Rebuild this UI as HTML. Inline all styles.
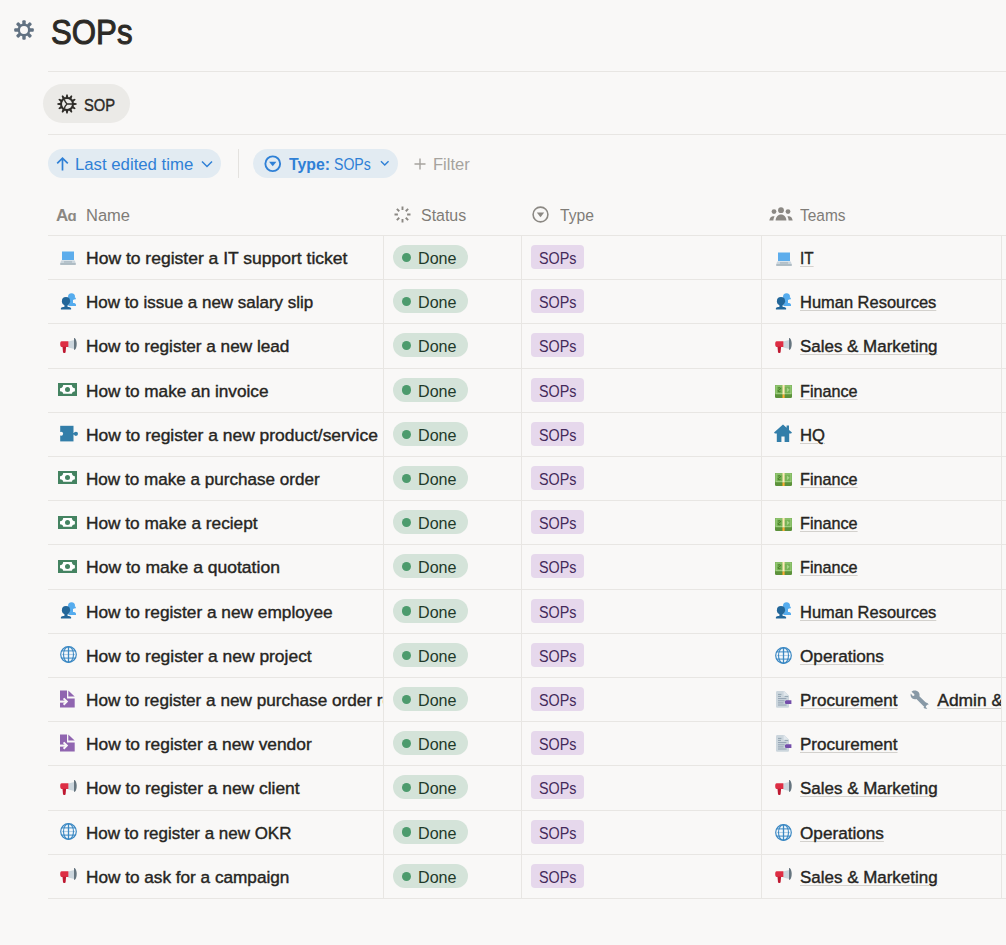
<!DOCTYPE html>
<html><head><meta charset="utf-8"><title>SOPs</title>
<style>
html,body{margin:0;padding:0;width:1006px;height:945px;overflow:hidden;background:#f9f8f7;font-family:"Liberation Sans",sans-serif;position:relative}
.t{position:absolute;white-space:nowrap;transform-origin:0 50%}
u{text-decoration:underline;text-decoration-color:#d3d1cd;text-decoration-thickness:1px;text-underline-offset:1.5px}
svg{overflow:visible}
</style></head><body>
<svg style="position:absolute;left:13.9px;top:19.9px" width="20" height="20" viewBox="0 0 20 20"><circle cx="10" cy="10" r="5.2" fill="none" stroke="#627282" stroke-width="2.4"/><rect x="8.3" y="0.2" width="3.4" height="5" rx="1" fill="#627282" transform="rotate(0 10 10)"/><rect x="8.3" y="0.2" width="3.4" height="5" rx="1" fill="#627282" transform="rotate(45 10 10)"/><rect x="8.3" y="0.2" width="3.4" height="5" rx="1" fill="#627282" transform="rotate(90 10 10)"/><rect x="8.3" y="0.2" width="3.4" height="5" rx="1" fill="#627282" transform="rotate(135 10 10)"/><rect x="8.3" y="0.2" width="3.4" height="5" rx="1" fill="#627282" transform="rotate(180 10 10)"/><rect x="8.3" y="0.2" width="3.4" height="5" rx="1" fill="#627282" transform="rotate(225 10 10)"/><rect x="8.3" y="0.2" width="3.4" height="5" rx="1" fill="#627282" transform="rotate(270 10 10)"/><rect x="8.3" y="0.2" width="3.4" height="5" rx="1" fill="#627282" transform="rotate(315 10 10)"/></svg>
<div class="t" id="t1" style="left:50.50px;top:19.77px;font-size:35px;line-height:24px;color:#2c2a26;transform:scaleX(0.8915);-webkit-text-stroke:1.0px #2c2a26;">SOPs</div>
<div style="position:absolute;left:48px;top:71px;width:958px;height:1px;background:#e8e6e3"></div>
<div style="position:absolute;left:43px;top:84px;width:87px;height:39px;background:#ebeae7;border-radius:20px"></div>
<svg style="position:absolute;left:56.9px;top:93.9px" width="20" height="20" viewBox="0 0 20 20"><polygon points="8.65,3.64 9.33,0.42 10.67,0.42 11.35,3.64 12.01,3.82 14.21,1.37 15.37,2.04 14.35,5.17 14.83,5.65 17.96,4.63 18.63,5.79 16.18,7.99 16.36,8.65 19.58,9.33 19.58,10.67 16.36,11.35 16.18,12.01 18.63,14.21 17.96,15.37 14.83,14.35 14.35,14.83 15.37,17.96 14.21,18.63 12.01,16.18 11.35,16.36 10.67,19.58 9.33,19.58 8.65,16.36 7.99,16.18 5.79,18.63 4.63,17.96 5.65,14.83 5.17,14.35 2.04,15.37 1.37,14.21 3.82,12.01 3.64,11.35 0.42,10.67 0.42,9.33 3.64,8.65 3.82,7.99 1.37,5.79 2.04,4.63 5.17,5.65 5.65,5.17 4.63,2.04 5.79,1.37 7.99,3.82" fill="#2f2d29"/><circle cx="10" cy="10" r="6.9" fill="#2f2d29"/><circle cx="10" cy="10" r="5.0" fill="#ebeae7"/><path d="M10 10H15M10 10C8.4 8.6 7.6 7.2 7.4 5.4M10 10C8.4 11.4 7.6 12.8 7.4 14.6" fill="none" stroke="#2f2d29" stroke-width="1.3"/></svg>
<div class="t" id="t2" style="left:83.90px;top:92.57px;font-size:17.4px;line-height:24px;color:#2f2d29;transform:scaleX(0.8493);-webkit-text-stroke:0.4px #262522;">SOP</div>
<div style="position:absolute;left:48px;top:134px;width:958px;height:1px;background:#e8e6e3"></div>
<div style="position:absolute;left:48px;top:149px;width:173px;height:29px;background:#e2ebf2;border-radius:15px"></div>
<svg style="position:absolute;left:56px;top:157px" width="13" height="14" viewBox="0 0 13 14"><path d="M6.5 1.2V13.5M1.2 6.4L6.5 1.2l5.3 5.2" fill="none" stroke="#2f80d6" stroke-width="1.7"/></svg>
<div class="t" id="t3" style="left:74.80px;top:151.97px;font-size:17.4px;line-height:24px;color:#2f80d6;transform:scaleX(0.9627);">Last edited time</div>
<svg style="position:absolute;left:200.5px;top:160px" width="12" height="8" viewBox="0 0 12 8"><path d="M1 1.5l5 5 5-5" fill="none" stroke="#2f80d6" stroke-width="1.5"/></svg>
<div style="position:absolute;left:238px;top:149px;width:1px;height:29px;background:#e4e2df"></div>
<div style="position:absolute;left:253px;top:149px;width:145px;height:29px;background:#e2ebf2;border-radius:15px"></div>
<svg style="position:absolute;left:264px;top:155px" width="17.5" height="17.5" viewBox="0 0 18 18"><circle cx="9" cy="9" r="7.6" fill="none" stroke="#2f80d6" stroke-width="1.9"/><path d="M5.2 7h7.6L9 11.6z" fill="#2f80d6"/></svg>
<div class="t" id="t4" style="left:289.30px;top:151.97px;font-size:17.4px;line-height:24px;color:#2f80d6;font-weight:700;transform:scaleX(0.9092);">Type:</div>
<div class="t" id="t5" style="left:334.20px;top:151.97px;font-size:17.4px;line-height:24px;color:#2f80d6;transform:scaleX(0.8102);">SOPs</div>
<svg style="position:absolute;left:380px;top:160px" width="9.5" height="7" viewBox="0 0 10 7"><path d="M1 1.2l4 4 4-4" fill="none" stroke="#2f80d6" stroke-width="1.5"/></svg>
<svg style="position:absolute;left:414px;top:158px" width="12" height="12" viewBox="0 0 12 12"><path d="M6 0.5v11M0.5 6h11" stroke="#a6a39e" stroke-width="1.4"/></svg>
<div class="t" id="t6" style="left:432.70px;top:152.27px;font-size:17.4px;line-height:24px;color:#a6a39e;transform:scaleX(0.9520);">Filter</div>
<svg style="position:absolute;left:56px;top:207.5px" width="22" height="14" viewBox="0 0 22 14"><text x="0" y="13.4" font-family="Liberation Sans" font-weight="700" font-size="17" fill="#8b8883">A</text><text x="11.6" y="13.4" font-family="Liberation Sans" font-weight="700" font-size="15" fill="#8b8883">ɑ</text></svg>
<div class="t" id="t7" style="left:85.70px;top:202.97px;font-size:17.4px;line-height:24px;color:#7f7c77;transform:scaleX(0.9485);">Name</div>
<svg style="position:absolute;left:394px;top:206px" width="17" height="17" viewBox="0 0 17 17"><path d="M8.50 3.90L8.50 0.50M11.75 5.25L14.16 2.84M13.10 8.50L16.50 8.50M11.75 11.75L14.16 14.16M8.50 13.10L8.50 16.50M5.25 11.75L2.84 14.16M3.90 8.50L0.50 8.50M5.25 5.25L2.84 2.84" stroke="#8b8883" stroke-width="1.9"/></svg>
<div class="t" id="t8" style="left:421.20px;top:202.97px;font-size:17.4px;line-height:24px;color:#7f7c77;transform:scaleX(0.9166);">Status</div>
<svg style="position:absolute;left:531.5px;top:205.8px" width="17" height="17" viewBox="0 0 17 17"><circle cx="8.5" cy="8.5" r="7.4" fill="none" stroke="#8b8883" stroke-width="1.6"/><path d="M4.8 6.6h7.4L8.5 11.2z" fill="#8b8883"/></svg>
<div class="t" id="t9" style="left:560.00px;top:202.97px;font-size:17.4px;line-height:24px;color:#7f7c77;transform:scaleX(0.9018);">Type</div>
<svg style="position:absolute;left:768.5px;top:206.5px" width="24" height="14" viewBox="0 0 24 14"><circle cx="5" cy="4.6" r="2.4" fill="#8b8883"/><circle cx="12" cy="3.2" r="2.9" fill="#8b8883"/><circle cx="19" cy="4.6" r="2.4" fill="#8b8883"/><path d="M6.6 13.6c0-3.6 2.4-6.2 5.4-6.2s5.4 2.6 5.4 6.2z" fill="#8b8883"/><path d="M0.3 13.6c0.4-2.4 1.6-4.2 3.4-4.4 0.7 0 1.4 0.1 2 0.4-0.8 1-1.2 2.4-1.3 4z" fill="#8b8883"/><path d="M23.7 13.6c-0.4-2.4-1.6-4.2-3.4-4.4-0.7 0-1.4 0.1-2 0.4 0.8 1 1.2 2.4 1.3 4z" fill="#8b8883"/></svg>
<div class="t" id="t10" style="left:800.00px;top:202.97px;font-size:17.4px;line-height:24px;color:#7f7c77;transform:scaleX(0.8881);">Teams</div>
<div style="position:absolute;left:48px;top:235.00px;width:958px;height:1px;background:#e8e6e3"></div>
<div style="position:absolute;left:48px;top:279.20px;width:958px;height:1px;background:#e8e6e3"></div>
<div style="position:absolute;left:48px;top:323.40px;width:958px;height:1px;background:#e8e6e3"></div>
<div style="position:absolute;left:48px;top:367.60px;width:958px;height:1px;background:#e8e6e3"></div>
<div style="position:absolute;left:48px;top:411.80px;width:958px;height:1px;background:#e8e6e3"></div>
<div style="position:absolute;left:48px;top:456.00px;width:958px;height:1px;background:#e8e6e3"></div>
<div style="position:absolute;left:48px;top:500.20px;width:958px;height:1px;background:#e8e6e3"></div>
<div style="position:absolute;left:48px;top:544.40px;width:958px;height:1px;background:#e8e6e3"></div>
<div style="position:absolute;left:48px;top:588.60px;width:958px;height:1px;background:#e8e6e3"></div>
<div style="position:absolute;left:48px;top:632.80px;width:958px;height:1px;background:#e8e6e3"></div>
<div style="position:absolute;left:48px;top:677.00px;width:958px;height:1px;background:#e8e6e3"></div>
<div style="position:absolute;left:48px;top:721.20px;width:958px;height:1px;background:#e8e6e3"></div>
<div style="position:absolute;left:48px;top:765.40px;width:958px;height:1px;background:#e8e6e3"></div>
<div style="position:absolute;left:48px;top:809.60px;width:958px;height:1px;background:#e8e6e3"></div>
<div style="position:absolute;left:48px;top:853.80px;width:958px;height:1px;background:#e8e6e3"></div>
<div style="position:absolute;left:48px;top:898.00px;width:958px;height:1px;background:#e8e6e3"></div>
<div style="position:absolute;left:383px;top:235.0px;width:1px;height:663.00px;background:#e8e6e3"></div>
<div style="position:absolute;left:521px;top:235.0px;width:1px;height:663.00px;background:#e8e6e3"></div>
<div style="position:absolute;left:761px;top:235.0px;width:1px;height:663.00px;background:#e8e6e3"></div>
<div style="position:absolute;left:1001px;top:235.0px;width:1px;height:663.00px;background:#e8e6e3"></div>
<svg style="position:absolute;left:60px;top:251.0px" width="16" height="14" viewBox="0 0 16 14"><rect x="2" y="0.5" width="12" height="8.6" fill="#5dadec"/><path d="M1.2 9.6h13.6l1 2.6H0.2z" fill="#ccd6dd"/><rect x="0" y="12.2" width="16" height="1.6" rx="0.8" fill="#99aab5"/><rect x="4" y="10.5" width="8" height="0.9" fill="#99aab5"/></svg>
<div class="t" id="t11" style="left:86.00px;top:245.97px;font-size:17.4px;line-height:24px;color:#262522;transform:scaleX(1.0066);-webkit-text-stroke:0.4px #262522;">How to register a IT support ticket</div>
<div style="position:absolute;left:393px;top:245.00px;width:75px;height:24px;background:#d4e3d9;border-radius:12px"></div>
<div style="position:absolute;left:402px;top:252.80px;width:9.3px;height:9.3px;background:#4c9b6d;border-radius:50%"></div>
<div class="t" id="t12" style="left:418.10px;top:245.97px;font-size:17.4px;line-height:24px;color:#1f3a2a;transform:scaleX(0.9260);">Done</div>
<div style="position:absolute;left:531px;top:245.00px;width:53px;height:24px;background:#e6d8ec;border-radius:4px"></div>
<div class="t" id="t13" style="left:538.90px;top:245.97px;font-size:17.4px;line-height:24px;color:#442a5a;transform:scaleX(0.8256);">SOPs</div>
<svg style="position:absolute;left:775.5px;top:252.0px" width="16" height="14" viewBox="0 0 16 14"><rect x="2" y="0.5" width="12" height="8.6" fill="#5dadec"/><path d="M1.2 9.6h13.6l1 2.6H0.2z" fill="#ccd6dd"/><rect x="0" y="12.2" width="16" height="1.6" rx="0.8" fill="#99aab5"/><rect x="4" y="10.5" width="8" height="0.9" fill="#99aab5"/></svg>
<div class="t" id="t14" style="left:800.00px;top:245.97px;font-size:17.4px;line-height:24px;color:#262522;transform:scaleX(0.8792);-webkit-text-stroke:0.4px #262522;"><u>IT</u></div>
<svg style="position:absolute;left:60px;top:292.7px" width="16" height="17" viewBox="0 0 16 17"><circle cx="11.5" cy="3.8" r="3.5" fill="#55acee"/><circle cx="14.9" cy="5.5" r="1" fill="#55acee"/><rect x="10" y="6" width="3" height="5" fill="#55acee"/><path d="M8.4 13v-1.2c0-1 0.8-1.5 2-1.8h3.6c1.3 0.3 2 0.9 2 1.8V13z" fill="#55acee"/><circle cx="6" cy="8.2" r="4.1" fill="#226699"/><rect x="4.4" y="11" width="3.2" height="3.6" fill="#226699"/><path d="M0.9 16.4v-0.9c0-0.8 0.8-1.3 2.2-1.6h5.8c1.3 0.3 2 0.8 2.2 1.6v0.9z" fill="#226699"/></svg>
<div class="t" id="t15" style="left:86.00px;top:290.17px;font-size:17.4px;line-height:24px;color:#262522;transform:scaleX(0.9757);-webkit-text-stroke:0.4px #262522;">How to issue a new salary slip</div>
<div style="position:absolute;left:393px;top:289.20px;width:75px;height:24px;background:#d4e3d9;border-radius:12px"></div>
<div style="position:absolute;left:402px;top:297.00px;width:9.3px;height:9.3px;background:#4c9b6d;border-radius:50%"></div>
<div class="t" id="t16" style="left:418.10px;top:290.17px;font-size:17.4px;line-height:24px;color:#1f3a2a;transform:scaleX(0.9260);">Done</div>
<div style="position:absolute;left:531px;top:289.20px;width:53px;height:24px;background:#e6d8ec;border-radius:4px"></div>
<div class="t" id="t17" style="left:538.90px;top:290.17px;font-size:17.4px;line-height:24px;color:#442a5a;transform:scaleX(0.8256);">SOPs</div>
<svg style="position:absolute;left:775px;top:292.7px" width="16" height="17" viewBox="0 0 16 17"><circle cx="11.5" cy="3.8" r="3.5" fill="#55acee"/><circle cx="14.9" cy="5.5" r="1" fill="#55acee"/><rect x="10" y="6" width="3" height="5" fill="#55acee"/><path d="M8.4 13v-1.2c0-1 0.8-1.5 2-1.8h3.6c1.3 0.3 2 0.9 2 1.8V13z" fill="#55acee"/><circle cx="6" cy="8.2" r="4.1" fill="#226699"/><rect x="4.4" y="11" width="3.2" height="3.6" fill="#226699"/><path d="M0.9 16.4v-0.9c0-0.8 0.8-1.3 2.2-1.6h5.8c1.3 0.3 2 0.8 2.2 1.6v0.9z" fill="#226699"/></svg>
<div class="t" id="t18" style="left:800.00px;top:290.17px;font-size:17.4px;line-height:24px;color:#262522;transform:scaleX(0.9463);-webkit-text-stroke:0.4px #262522;"><u>Human Resources</u></div>
<svg style="position:absolute;left:60px;top:336.9px" width="17" height="16" viewBox="0 0 17 16"><path d="M8.2 4.6L14.4 3v9L8.2 10.6z" fill="#ccd6dd"/><path d="M14 1.1c1.6 0 2.7 2.7 2.7 5.9s-1.1 5.9-2.7 5.9z" fill="#66757f"/><path d="M0.2 7.1c0-1.6 0.4-2.9 1.4-2.9H8.4v5.9H1.6C0.6 10.1 0.2 8.7 0.2 7.1z" fill="#dd2e44"/><path d="M2.5 9.8h3.6l-0.5 5.4c-0.2 1-2.4 1-2.6 0z" fill="#be1931"/></svg>
<div class="t" id="t19" style="left:86.00px;top:334.37px;font-size:17.4px;line-height:24px;color:#262522;transform:scaleX(0.9878);-webkit-text-stroke:0.4px #262522;">How to register a new lead</div>
<div style="position:absolute;left:393px;top:333.40px;width:75px;height:24px;background:#d4e3d9;border-radius:12px"></div>
<div style="position:absolute;left:402px;top:341.20px;width:9.3px;height:9.3px;background:#4c9b6d;border-radius:50%"></div>
<div class="t" id="t20" style="left:418.10px;top:334.37px;font-size:17.4px;line-height:24px;color:#1f3a2a;transform:scaleX(0.9260);">Done</div>
<div style="position:absolute;left:531px;top:333.40px;width:53px;height:24px;background:#e6d8ec;border-radius:4px"></div>
<div class="t" id="t21" style="left:538.90px;top:334.37px;font-size:17.4px;line-height:24px;color:#442a5a;transform:scaleX(0.8256);">SOPs</div>
<svg style="position:absolute;left:775px;top:336.9px" width="17" height="16" viewBox="0 0 17 16"><path d="M8.2 4.6L14.4 3v9L8.2 10.6z" fill="#ccd6dd"/><path d="M14 1.1c1.6 0 2.7 2.7 2.7 5.9s-1.1 5.9-2.7 5.9z" fill="#66757f"/><path d="M0.2 7.1c0-1.6 0.4-2.9 1.4-2.9H8.4v5.9H1.6C0.6 10.1 0.2 8.7 0.2 7.1z" fill="#dd2e44"/><path d="M2.5 9.8h3.6l-0.5 5.4c-0.2 1-2.4 1-2.6 0z" fill="#be1931"/></svg>
<div class="t" id="t22" style="left:800.00px;top:334.37px;font-size:17.4px;line-height:24px;color:#262522;transform:scaleX(0.9743);-webkit-text-stroke:0.4px #262522;"><u>Sales &amp; Marketing</u></div>
<svg style="position:absolute;left:58px;top:383.0px" width="19" height="13" viewBox="0 0 19 13"><rect x="0" y="0" width="19" height="13" fill="#448361"/><path d="M5.2 2.1H13.8Q14 5 16.9 5.3V8.2Q14 8.5 13.8 10.8H5.2Q5 8.5 2 8.2V5.3Q5 5 5.2 2.1z" fill="#fff"/><circle cx="9.5" cy="6.4" r="2.5" fill="#448361"/></svg>
<div class="t" id="t23" style="left:86.00px;top:378.57px;font-size:17.4px;line-height:24px;color:#262522;transform:scaleX(0.9885);-webkit-text-stroke:0.4px #262522;">How to make an invoice</div>
<div style="position:absolute;left:393px;top:377.60px;width:75px;height:24px;background:#d4e3d9;border-radius:12px"></div>
<div style="position:absolute;left:402px;top:385.40px;width:9.3px;height:9.3px;background:#4c9b6d;border-radius:50%"></div>
<div class="t" id="t24" style="left:418.10px;top:378.57px;font-size:17.4px;line-height:24px;color:#1f3a2a;transform:scaleX(0.9260);">Done</div>
<div style="position:absolute;left:531px;top:377.60px;width:53px;height:24px;background:#e6d8ec;border-radius:4px"></div>
<div class="t" id="t25" style="left:538.90px;top:378.57px;font-size:17.4px;line-height:24px;color:#442a5a;transform:scaleX(0.8256);">SOPs</div>
<svg style="position:absolute;left:775px;top:384.9px" width="17" height="13" viewBox="0 0 17 13"><rect x="0" y="0" width="17" height="13" rx="1.3" fill="#5c913b"/><rect x="0" y="0" width="17" height="9.6" rx="1.1" fill="#77b255"/><rect x="1.1" y="1" width="14.8" height="7.6" fill="none" stroke="#a6d388" stroke-width="0.8"/><path d="M11.9 2.4l2.7 2.4-2.7 2.4z" fill="#a6d388"/><path d="M3 3.3c0.8-0.9 2.5-0.7 2.5 0.4 0 1.1-2.5 0.9-2.5 2.2 0 1.1 1.7 1.1 2.5 0.4" fill="none" stroke="#3e721d" stroke-width="0.9"/><rect x="7.5" y="0" width="2.1" height="9.6" fill="#ffe8b6"/><rect x="7.5" y="9.6" width="2.1" height="3.4" fill="#ffac33"/></svg>
<div class="t" id="t26" style="left:800.00px;top:378.57px;font-size:17.4px;line-height:24px;color:#262522;transform:scaleX(0.9309);-webkit-text-stroke:0.4px #262522;"><u>Finance</u></div>
<svg style="position:absolute;left:59.5px;top:424.8px" width="19" height="17" viewBox="0 0 19 17"><rect x="0.2" y="0.8" width="13.3" height="15.6" fill="#337ea9"/><rect x="13" y="8" width="2" height="1.6" fill="#337ea9"/><circle cx="15.9" cy="8.8" r="2.1" fill="#337ea9"/><circle cx="1.1" cy="8.8" r="2.0" fill="#f9f8f7"/></svg>
<div class="t" id="t27" style="left:86.00px;top:422.77px;font-size:17.4px;line-height:24px;color:#262522;transform:scaleX(1.0033);-webkit-text-stroke:0.4px #262522;">How to register a new product/service</div>
<div style="position:absolute;left:393px;top:421.80px;width:75px;height:24px;background:#d4e3d9;border-radius:12px"></div>
<div style="position:absolute;left:402px;top:429.60px;width:9.3px;height:9.3px;background:#4c9b6d;border-radius:50%"></div>
<div class="t" id="t28" style="left:418.10px;top:422.77px;font-size:17.4px;line-height:24px;color:#1f3a2a;transform:scaleX(0.9260);">Done</div>
<div style="position:absolute;left:531px;top:421.80px;width:53px;height:24px;background:#e6d8ec;border-radius:4px"></div>
<div class="t" id="t29" style="left:538.90px;top:422.77px;font-size:17.4px;line-height:24px;color:#442a5a;transform:scaleX(0.8256);">SOPs</div>
<svg style="position:absolute;left:773.5px;top:424.3px" width="18" height="18" viewBox="0 0 18 18"><path d="M9 0.4L0 8.6l0.9 1h1.9V18h4.6v-5.4h3.2V18h4.6V9.6h1.9l0.9-1-3-2.7V1.4h-2.4v2.3z" fill="#337ea9"/></svg>
<div class="t" id="t30" style="left:800.00px;top:422.77px;font-size:17.4px;line-height:24px;color:#262522;transform:scaleX(0.9581);-webkit-text-stroke:0.4px #262522;"><u>HQ</u></div>
<svg style="position:absolute;left:58px;top:471.4px" width="19" height="13" viewBox="0 0 19 13"><rect x="0" y="0" width="19" height="13" fill="#448361"/><path d="M5.2 2.1H13.8Q14 5 16.9 5.3V8.2Q14 8.5 13.8 10.8H5.2Q5 8.5 2 8.2V5.3Q5 5 5.2 2.1z" fill="#fff"/><circle cx="9.5" cy="6.4" r="2.5" fill="#448361"/></svg>
<div class="t" id="t31" style="left:86.00px;top:466.97px;font-size:17.4px;line-height:24px;color:#262522;transform:scaleX(0.9824);-webkit-text-stroke:0.4px #262522;">How to make a purchase order</div>
<div style="position:absolute;left:393px;top:466.00px;width:75px;height:24px;background:#d4e3d9;border-radius:12px"></div>
<div style="position:absolute;left:402px;top:473.80px;width:9.3px;height:9.3px;background:#4c9b6d;border-radius:50%"></div>
<div class="t" id="t32" style="left:418.10px;top:466.97px;font-size:17.4px;line-height:24px;color:#1f3a2a;transform:scaleX(0.9260);">Done</div>
<div style="position:absolute;left:531px;top:466.00px;width:53px;height:24px;background:#e6d8ec;border-radius:4px"></div>
<div class="t" id="t33" style="left:538.90px;top:466.97px;font-size:17.4px;line-height:24px;color:#442a5a;transform:scaleX(0.8256);">SOPs</div>
<svg style="position:absolute;left:775px;top:473.3px" width="17" height="13" viewBox="0 0 17 13"><rect x="0" y="0" width="17" height="13" rx="1.3" fill="#5c913b"/><rect x="0" y="0" width="17" height="9.6" rx="1.1" fill="#77b255"/><rect x="1.1" y="1" width="14.8" height="7.6" fill="none" stroke="#a6d388" stroke-width="0.8"/><path d="M11.9 2.4l2.7 2.4-2.7 2.4z" fill="#a6d388"/><path d="M3 3.3c0.8-0.9 2.5-0.7 2.5 0.4 0 1.1-2.5 0.9-2.5 2.2 0 1.1 1.7 1.1 2.5 0.4" fill="none" stroke="#3e721d" stroke-width="0.9"/><rect x="7.5" y="0" width="2.1" height="9.6" fill="#ffe8b6"/><rect x="7.5" y="9.6" width="2.1" height="3.4" fill="#ffac33"/></svg>
<div class="t" id="t34" style="left:800.00px;top:466.97px;font-size:17.4px;line-height:24px;color:#262522;transform:scaleX(0.9309);-webkit-text-stroke:0.4px #262522;"><u>Finance</u></div>
<svg style="position:absolute;left:58px;top:515.6px" width="19" height="13" viewBox="0 0 19 13"><rect x="0" y="0" width="19" height="13" fill="#448361"/><path d="M5.2 2.1H13.8Q14 5 16.9 5.3V8.2Q14 8.5 13.8 10.8H5.2Q5 8.5 2 8.2V5.3Q5 5 5.2 2.1z" fill="#fff"/><circle cx="9.5" cy="6.4" r="2.5" fill="#448361"/></svg>
<div class="t" id="t35" style="left:86.00px;top:511.17px;font-size:17.4px;line-height:24px;color:#262522;transform:scaleX(0.9918);-webkit-text-stroke:0.4px #262522;">How to make a reciept</div>
<div style="position:absolute;left:393px;top:510.20px;width:75px;height:24px;background:#d4e3d9;border-radius:12px"></div>
<div style="position:absolute;left:402px;top:518.00px;width:9.3px;height:9.3px;background:#4c9b6d;border-radius:50%"></div>
<div class="t" id="t36" style="left:418.10px;top:511.17px;font-size:17.4px;line-height:24px;color:#1f3a2a;transform:scaleX(0.9260);">Done</div>
<div style="position:absolute;left:531px;top:510.20px;width:53px;height:24px;background:#e6d8ec;border-radius:4px"></div>
<div class="t" id="t37" style="left:538.90px;top:511.17px;font-size:17.4px;line-height:24px;color:#442a5a;transform:scaleX(0.8256);">SOPs</div>
<svg style="position:absolute;left:775px;top:517.5px" width="17" height="13" viewBox="0 0 17 13"><rect x="0" y="0" width="17" height="13" rx="1.3" fill="#5c913b"/><rect x="0" y="0" width="17" height="9.6" rx="1.1" fill="#77b255"/><rect x="1.1" y="1" width="14.8" height="7.6" fill="none" stroke="#a6d388" stroke-width="0.8"/><path d="M11.9 2.4l2.7 2.4-2.7 2.4z" fill="#a6d388"/><path d="M3 3.3c0.8-0.9 2.5-0.7 2.5 0.4 0 1.1-2.5 0.9-2.5 2.2 0 1.1 1.7 1.1 2.5 0.4" fill="none" stroke="#3e721d" stroke-width="0.9"/><rect x="7.5" y="0" width="2.1" height="9.6" fill="#ffe8b6"/><rect x="7.5" y="9.6" width="2.1" height="3.4" fill="#ffac33"/></svg>
<div class="t" id="t38" style="left:800.00px;top:511.17px;font-size:17.4px;line-height:24px;color:#262522;transform:scaleX(0.9309);-webkit-text-stroke:0.4px #262522;"><u>Finance</u></div>
<svg style="position:absolute;left:58px;top:559.8px" width="19" height="13" viewBox="0 0 19 13"><rect x="0" y="0" width="19" height="13" fill="#448361"/><path d="M5.2 2.1H13.8Q14 5 16.9 5.3V8.2Q14 8.5 13.8 10.8H5.2Q5 8.5 2 8.2V5.3Q5 5 5.2 2.1z" fill="#fff"/><circle cx="9.5" cy="6.4" r="2.5" fill="#448361"/></svg>
<div class="t" id="t39" style="left:86.00px;top:555.37px;font-size:17.4px;line-height:24px;color:#262522;transform:scaleX(1.0078);-webkit-text-stroke:0.4px #262522;">How to make a quotation</div>
<div style="position:absolute;left:393px;top:554.40px;width:75px;height:24px;background:#d4e3d9;border-radius:12px"></div>
<div style="position:absolute;left:402px;top:562.20px;width:9.3px;height:9.3px;background:#4c9b6d;border-radius:50%"></div>
<div class="t" id="t40" style="left:418.10px;top:555.37px;font-size:17.4px;line-height:24px;color:#1f3a2a;transform:scaleX(0.9260);">Done</div>
<div style="position:absolute;left:531px;top:554.40px;width:53px;height:24px;background:#e6d8ec;border-radius:4px"></div>
<div class="t" id="t41" style="left:538.90px;top:555.37px;font-size:17.4px;line-height:24px;color:#442a5a;transform:scaleX(0.8256);">SOPs</div>
<svg style="position:absolute;left:775px;top:561.7px" width="17" height="13" viewBox="0 0 17 13"><rect x="0" y="0" width="17" height="13" rx="1.3" fill="#5c913b"/><rect x="0" y="0" width="17" height="9.6" rx="1.1" fill="#77b255"/><rect x="1.1" y="1" width="14.8" height="7.6" fill="none" stroke="#a6d388" stroke-width="0.8"/><path d="M11.9 2.4l2.7 2.4-2.7 2.4z" fill="#a6d388"/><path d="M3 3.3c0.8-0.9 2.5-0.7 2.5 0.4 0 1.1-2.5 0.9-2.5 2.2 0 1.1 1.7 1.1 2.5 0.4" fill="none" stroke="#3e721d" stroke-width="0.9"/><rect x="7.5" y="0" width="2.1" height="9.6" fill="#ffe8b6"/><rect x="7.5" y="9.6" width="2.1" height="3.4" fill="#ffac33"/></svg>
<div class="t" id="t42" style="left:800.00px;top:555.37px;font-size:17.4px;line-height:24px;color:#262522;transform:scaleX(0.9309);-webkit-text-stroke:0.4px #262522;"><u>Finance</u></div>
<svg style="position:absolute;left:60px;top:602.1px" width="16" height="17" viewBox="0 0 16 17"><circle cx="11.5" cy="3.8" r="3.5" fill="#55acee"/><circle cx="14.9" cy="5.5" r="1" fill="#55acee"/><rect x="10" y="6" width="3" height="5" fill="#55acee"/><path d="M8.4 13v-1.2c0-1 0.8-1.5 2-1.8h3.6c1.3 0.3 2 0.9 2 1.8V13z" fill="#55acee"/><circle cx="6" cy="8.2" r="4.1" fill="#226699"/><rect x="4.4" y="11" width="3.2" height="3.6" fill="#226699"/><path d="M0.9 16.4v-0.9c0-0.8 0.8-1.3 2.2-1.6h5.8c1.3 0.3 2 0.8 2.2 1.6v0.9z" fill="#226699"/></svg>
<div class="t" id="t43" style="left:86.00px;top:599.57px;font-size:17.4px;line-height:24px;color:#262522;transform:scaleX(0.9931);-webkit-text-stroke:0.4px #262522;">How to register a new employee</div>
<div style="position:absolute;left:393px;top:598.60px;width:75px;height:24px;background:#d4e3d9;border-radius:12px"></div>
<div style="position:absolute;left:402px;top:606.40px;width:9.3px;height:9.3px;background:#4c9b6d;border-radius:50%"></div>
<div class="t" id="t44" style="left:418.10px;top:599.57px;font-size:17.4px;line-height:24px;color:#1f3a2a;transform:scaleX(0.9260);">Done</div>
<div style="position:absolute;left:531px;top:598.60px;width:53px;height:24px;background:#e6d8ec;border-radius:4px"></div>
<div class="t" id="t45" style="left:538.90px;top:599.57px;font-size:17.4px;line-height:24px;color:#442a5a;transform:scaleX(0.8256);">SOPs</div>
<svg style="position:absolute;left:775px;top:602.1px" width="16" height="17" viewBox="0 0 16 17"><circle cx="11.5" cy="3.8" r="3.5" fill="#55acee"/><circle cx="14.9" cy="5.5" r="1" fill="#55acee"/><rect x="10" y="6" width="3" height="5" fill="#55acee"/><path d="M8.4 13v-1.2c0-1 0.8-1.5 2-1.8h3.6c1.3 0.3 2 0.9 2 1.8V13z" fill="#55acee"/><circle cx="6" cy="8.2" r="4.1" fill="#226699"/><rect x="4.4" y="11" width="3.2" height="3.6" fill="#226699"/><path d="M0.9 16.4v-0.9c0-0.8 0.8-1.3 2.2-1.6h5.8c1.3 0.3 2 0.8 2.2 1.6v0.9z" fill="#226699"/></svg>
<div class="t" id="t46" style="left:800.00px;top:599.57px;font-size:17.4px;line-height:24px;color:#262522;transform:scaleX(0.9463);-webkit-text-stroke:0.4px #262522;"><u>Human Resources</u></div>
<svg style="position:absolute;left:60px;top:646.0px" width="17" height="17" viewBox="0 0 17 17"><circle cx="8.5" cy="8.5" r="7.8" fill="#f4f8fb" stroke="#3b88c3" stroke-width="1.2"/><path d="M1.2 8.5h14.6" stroke="#b3cfe5" stroke-width="1.1"/><ellipse cx="8.5" cy="8.5" rx="5" ry="7.8" fill="none" stroke="#3b88c3" stroke-width="1.1"/><path d="M8.5 0.8v15.4" stroke="#3b88c3" stroke-width="1.3"/><path d="M1.8 4.9h13.4M1.8 12.1h13.4" stroke="#3b88c3" stroke-width="1.0"/></svg>
<div class="t" id="t47" style="left:86.00px;top:643.77px;font-size:17.4px;line-height:24px;color:#262522;transform:scaleX(1.0021);-webkit-text-stroke:0.4px #262522;">How to register a new project</div>
<div style="position:absolute;left:393px;top:642.80px;width:75px;height:24px;background:#d4e3d9;border-radius:12px"></div>
<div style="position:absolute;left:402px;top:650.60px;width:9.3px;height:9.3px;background:#4c9b6d;border-radius:50%"></div>
<div class="t" id="t48" style="left:418.10px;top:643.77px;font-size:17.4px;line-height:24px;color:#1f3a2a;transform:scaleX(0.9260);">Done</div>
<div style="position:absolute;left:531px;top:642.80px;width:53px;height:24px;background:#e6d8ec;border-radius:4px"></div>
<div class="t" id="t49" style="left:538.90px;top:643.77px;font-size:17.4px;line-height:24px;color:#442a5a;transform:scaleX(0.8256);">SOPs</div>
<svg style="position:absolute;left:775px;top:646.9px" width="17" height="17" viewBox="0 0 17 17"><circle cx="8.5" cy="8.5" r="7.8" fill="#f4f8fb" stroke="#3b88c3" stroke-width="1.2"/><path d="M1.2 8.5h14.6" stroke="#b3cfe5" stroke-width="1.1"/><ellipse cx="8.5" cy="8.5" rx="5" ry="7.8" fill="none" stroke="#3b88c3" stroke-width="1.1"/><path d="M8.5 0.8v15.4" stroke="#3b88c3" stroke-width="1.3"/><path d="M1.8 4.9h13.4M1.8 12.1h13.4" stroke="#3b88c3" stroke-width="1.0"/></svg>
<div class="t" id="t50" style="left:800.00px;top:643.77px;font-size:17.4px;line-height:24px;color:#262522;transform:scaleX(0.9862);-webkit-text-stroke:0.4px #262522;"><u>Operations</u></div>
<svg style="position:absolute;left:60px;top:689.5px" width="16" height="18" viewBox="0 0 16 18"><path d="M0 0.4H7V8.5H14.7V17.4H0z" fill="#9065b0"/><path d="M8.3 0.4L14.7 6.5H8.3z" fill="#9065b0"/><path d="M-0.5 11.6H6.2" stroke="#f9f8f7" stroke-width="2.1"/><path d="M3.6 8.4L6.8 11.6 3.6 14.8" fill="none" stroke="#f9f8f7" stroke-width="2.0"/></svg>
<div style="position:absolute;left:0;top:0;width:383px;height:945px;overflow:hidden"><div class="t" id="t51" style="left:86.00px;top:687.97px;font-size:17.4px;line-height:24px;color:#262522;-webkit-text-stroke:0.4px #262522;transform:scaleX(0.9862);">How to register a new purchase order request</div></div>
<div style="position:absolute;left:393px;top:687.00px;width:75px;height:24px;background:#d4e3d9;border-radius:12px"></div>
<div style="position:absolute;left:402px;top:694.80px;width:9.3px;height:9.3px;background:#4c9b6d;border-radius:50%"></div>
<div class="t" id="t52" style="left:418.10px;top:687.97px;font-size:17.4px;line-height:24px;color:#1f3a2a;transform:scaleX(0.9260);">Done</div>
<div style="position:absolute;left:531px;top:687.00px;width:53px;height:24px;background:#e6d8ec;border-radius:4px"></div>
<div class="t" id="t53" style="left:538.90px;top:687.97px;font-size:17.4px;line-height:24px;color:#442a5a;transform:scaleX(0.8256);">SOPs</div>
<svg style="position:absolute;left:776px;top:691.0px" width="16" height="17" viewBox="0 0 16 17"><path d="M1.4 0h6.8L13 4.8V15.4c0 0.9-0.6 1.4-1.4 1.4H1.4C0.6 16.8 0 16.3 0 15.4V1.4C0 0.6 0.6 0 1.4 0z" fill="#ccd6dd"/><path d="M7.6 0v4.2c0 0.6 0.4 1 1 1H13z" fill="#e1e8ed"/><path d="M2 3.4h3.4M2 5.4h3M8.6 5.4h3.6M2 7.6h8.4M2 9.8h6.6M2 11.9h5.6M2 14h8.6" stroke="#8a9cab" stroke-width="0.9"/><path d="M10.4 9.2h5v3.9h-5c-0.9 0-1.5-0.9-1.5-1.95s0.6-1.95 1.5-1.95z" fill="#744eaa"/></svg>
<div class="t" id="t54" style="left:800.00px;top:687.97px;font-size:17.4px;line-height:24px;color:#262522;transform:scaleX(0.9793);-webkit-text-stroke:0.4px #262522;"><u>Procurement</u></div>
<svg style="position:absolute;left:911px;top:690.0px" width="18" height="18" viewBox="0 0 18 18"><path d="M3.6 0.4c-1.2 0-2.3 0.5-3.1 1.3l2.9 2.6-0.2 1.4-1.4 0.3L-0.2 3.4c-0.6 1.9 0 4 1.6 5.1 1.2 0.8 2.7 1 4 0.5l7.2 7.3c0.6 0.6 1.5 0.6 2.1 0l0.9-0.9c0.6-0.6 0.6-1.5 0-2.1L8.4 6.3c0.4-1.4 0.2-2.9-0.7-4.1C6.8 1 5.2 0.4 3.6 0.4z" fill="#8899a6"/><path d="M14.6 12.5c1.3 0 2.6 0.8 3.1 2l-2.4 0.5-0.6 1.9 1.6 1.6c-1.3 0.5-2.8 0.2-3.7-0.8z" fill="#8899a6"/></svg>
<div style="position:absolute;left:0;top:0;width:1001px;height:945px;overflow:hidden"><div class="t" id="t55" style="left:937.30px;top:687.97px;font-size:17.4px;line-height:24px;color:#262522;-webkit-text-stroke:0.4px #262522;"><u>Admin &amp; Office</u></div></div>
<svg style="position:absolute;left:60px;top:733.7px" width="16" height="18" viewBox="0 0 16 18"><path d="M0 0.4H7V8.5H14.7V17.4H0z" fill="#9065b0"/><path d="M8.3 0.4L14.7 6.5H8.3z" fill="#9065b0"/><path d="M-0.5 11.6H6.2" stroke="#f9f8f7" stroke-width="2.1"/><path d="M3.6 8.4L6.8 11.6 3.6 14.8" fill="none" stroke="#f9f8f7" stroke-width="2.0"/></svg>
<div class="t" id="t56" style="left:86.00px;top:732.17px;font-size:17.4px;line-height:24px;color:#262522;transform:scaleX(0.9978);-webkit-text-stroke:0.4px #262522;">How to register a new vendor</div>
<div style="position:absolute;left:393px;top:731.20px;width:75px;height:24px;background:#d4e3d9;border-radius:12px"></div>
<div style="position:absolute;left:402px;top:739.00px;width:9.3px;height:9.3px;background:#4c9b6d;border-radius:50%"></div>
<div class="t" id="t57" style="left:418.10px;top:732.17px;font-size:17.4px;line-height:24px;color:#1f3a2a;transform:scaleX(0.9260);">Done</div>
<div style="position:absolute;left:531px;top:731.20px;width:53px;height:24px;background:#e6d8ec;border-radius:4px"></div>
<div class="t" id="t58" style="left:538.90px;top:732.17px;font-size:17.4px;line-height:24px;color:#442a5a;transform:scaleX(0.8256);">SOPs</div>
<svg style="position:absolute;left:776px;top:735.2px" width="16" height="17" viewBox="0 0 16 17"><path d="M1.4 0h6.8L13 4.8V15.4c0 0.9-0.6 1.4-1.4 1.4H1.4C0.6 16.8 0 16.3 0 15.4V1.4C0 0.6 0.6 0 1.4 0z" fill="#ccd6dd"/><path d="M7.6 0v4.2c0 0.6 0.4 1 1 1H13z" fill="#e1e8ed"/><path d="M2 3.4h3.4M2 5.4h3M8.6 5.4h3.6M2 7.6h8.4M2 9.8h6.6M2 11.9h5.6M2 14h8.6" stroke="#8a9cab" stroke-width="0.9"/><path d="M10.4 9.2h5v3.9h-5c-0.9 0-1.5-0.9-1.5-1.95s0.6-1.95 1.5-1.95z" fill="#744eaa"/></svg>
<div class="t" id="t59" style="left:800.00px;top:732.17px;font-size:17.4px;line-height:24px;color:#262522;transform:scaleX(0.9793);-webkit-text-stroke:0.4px #262522;"><u>Procurement</u></div>
<svg style="position:absolute;left:60px;top:778.9px" width="17" height="16" viewBox="0 0 17 16"><path d="M8.2 4.6L14.4 3v9L8.2 10.6z" fill="#ccd6dd"/><path d="M14 1.1c1.6 0 2.7 2.7 2.7 5.9s-1.1 5.9-2.7 5.9z" fill="#66757f"/><path d="M0.2 7.1c0-1.6 0.4-2.9 1.4-2.9H8.4v5.9H1.6C0.6 10.1 0.2 8.7 0.2 7.1z" fill="#dd2e44"/><path d="M2.5 9.8h3.6l-0.5 5.4c-0.2 1-2.4 1-2.6 0z" fill="#be1931"/></svg>
<div class="t" id="t60" style="left:86.00px;top:776.37px;font-size:17.4px;line-height:24px;color:#262522;-webkit-text-stroke:0.4px #262522;">How to register a new client</div>
<div style="position:absolute;left:393px;top:775.40px;width:75px;height:24px;background:#d4e3d9;border-radius:12px"></div>
<div style="position:absolute;left:402px;top:783.20px;width:9.3px;height:9.3px;background:#4c9b6d;border-radius:50%"></div>
<div class="t" id="t61" style="left:418.10px;top:776.37px;font-size:17.4px;line-height:24px;color:#1f3a2a;transform:scaleX(0.9260);">Done</div>
<div style="position:absolute;left:531px;top:775.40px;width:53px;height:24px;background:#e6d8ec;border-radius:4px"></div>
<div class="t" id="t62" style="left:538.90px;top:776.37px;font-size:17.4px;line-height:24px;color:#442a5a;transform:scaleX(0.8256);">SOPs</div>
<svg style="position:absolute;left:775px;top:778.9px" width="17" height="16" viewBox="0 0 17 16"><path d="M8.2 4.6L14.4 3v9L8.2 10.6z" fill="#ccd6dd"/><path d="M14 1.1c1.6 0 2.7 2.7 2.7 5.9s-1.1 5.9-2.7 5.9z" fill="#66757f"/><path d="M0.2 7.1c0-1.6 0.4-2.9 1.4-2.9H8.4v5.9H1.6C0.6 10.1 0.2 8.7 0.2 7.1z" fill="#dd2e44"/><path d="M2.5 9.8h3.6l-0.5 5.4c-0.2 1-2.4 1-2.6 0z" fill="#be1931"/></svg>
<div class="t" id="t63" style="left:800.00px;top:776.37px;font-size:17.4px;line-height:24px;color:#262522;transform:scaleX(0.9750);-webkit-text-stroke:0.4px #262522;"><u>Sales &amp; Marketing</u></div>
<svg style="position:absolute;left:60px;top:822.8px" width="17" height="17" viewBox="0 0 17 17"><circle cx="8.5" cy="8.5" r="7.8" fill="#f4f8fb" stroke="#3b88c3" stroke-width="1.2"/><path d="M1.2 8.5h14.6" stroke="#b3cfe5" stroke-width="1.1"/><ellipse cx="8.5" cy="8.5" rx="5" ry="7.8" fill="none" stroke="#3b88c3" stroke-width="1.1"/><path d="M8.5 0.8v15.4" stroke="#3b88c3" stroke-width="1.3"/><path d="M1.8 4.9h13.4M1.8 12.1h13.4" stroke="#3b88c3" stroke-width="1.0"/></svg>
<div class="t" id="t64" style="left:86.00px;top:820.57px;font-size:17.4px;line-height:24px;color:#262522;transform:scaleX(0.9748);-webkit-text-stroke:0.4px #262522;">How to register a new OKR</div>
<div style="position:absolute;left:393px;top:819.60px;width:75px;height:24px;background:#d4e3d9;border-radius:12px"></div>
<div style="position:absolute;left:402px;top:827.40px;width:9.3px;height:9.3px;background:#4c9b6d;border-radius:50%"></div>
<div class="t" id="t65" style="left:418.10px;top:820.57px;font-size:17.4px;line-height:24px;color:#1f3a2a;transform:scaleX(0.9260);">Done</div>
<div style="position:absolute;left:531px;top:819.60px;width:53px;height:24px;background:#e6d8ec;border-radius:4px"></div>
<div class="t" id="t66" style="left:538.90px;top:820.57px;font-size:17.4px;line-height:24px;color:#442a5a;transform:scaleX(0.8256);">SOPs</div>
<svg style="position:absolute;left:775px;top:823.7px" width="17" height="17" viewBox="0 0 17 17"><circle cx="8.5" cy="8.5" r="7.8" fill="#f4f8fb" stroke="#3b88c3" stroke-width="1.2"/><path d="M1.2 8.5h14.6" stroke="#b3cfe5" stroke-width="1.1"/><ellipse cx="8.5" cy="8.5" rx="5" ry="7.8" fill="none" stroke="#3b88c3" stroke-width="1.1"/><path d="M8.5 0.8v15.4" stroke="#3b88c3" stroke-width="1.3"/><path d="M1.8 4.9h13.4M1.8 12.1h13.4" stroke="#3b88c3" stroke-width="1.0"/></svg>
<div class="t" id="t67" style="left:800.00px;top:820.57px;font-size:17.4px;line-height:24px;color:#262522;transform:scaleX(0.9862);-webkit-text-stroke:0.4px #262522;"><u>Operations</u></div>
<svg style="position:absolute;left:60px;top:867.3px" width="17" height="16" viewBox="0 0 17 16"><path d="M8.2 4.6L14.4 3v9L8.2 10.6z" fill="#ccd6dd"/><path d="M14 1.1c1.6 0 2.7 2.7 2.7 5.9s-1.1 5.9-2.7 5.9z" fill="#66757f"/><path d="M0.2 7.1c0-1.6 0.4-2.9 1.4-2.9H8.4v5.9H1.6C0.6 10.1 0.2 8.7 0.2 7.1z" fill="#dd2e44"/><path d="M2.5 9.8h3.6l-0.5 5.4c-0.2 1-2.4 1-2.6 0z" fill="#be1931"/></svg>
<div class="t" id="t68" style="left:86.00px;top:864.77px;font-size:17.4px;line-height:24px;color:#262522;transform:scaleX(0.9879);-webkit-text-stroke:0.4px #262522;">How to ask for a campaign</div>
<div style="position:absolute;left:393px;top:863.80px;width:75px;height:24px;background:#d4e3d9;border-radius:12px"></div>
<div style="position:absolute;left:402px;top:871.60px;width:9.3px;height:9.3px;background:#4c9b6d;border-radius:50%"></div>
<div class="t" id="t69" style="left:418.10px;top:864.77px;font-size:17.4px;line-height:24px;color:#1f3a2a;transform:scaleX(0.9260);">Done</div>
<div style="position:absolute;left:531px;top:863.80px;width:53px;height:24px;background:#e6d8ec;border-radius:4px"></div>
<div class="t" id="t70" style="left:538.90px;top:864.77px;font-size:17.4px;line-height:24px;color:#442a5a;transform:scaleX(0.8256);">SOPs</div>
<svg style="position:absolute;left:775px;top:867.3px" width="17" height="16" viewBox="0 0 17 16"><path d="M8.2 4.6L14.4 3v9L8.2 10.6z" fill="#ccd6dd"/><path d="M14 1.1c1.6 0 2.7 2.7 2.7 5.9s-1.1 5.9-2.7 5.9z" fill="#66757f"/><path d="M0.2 7.1c0-1.6 0.4-2.9 1.4-2.9H8.4v5.9H1.6C0.6 10.1 0.2 8.7 0.2 7.1z" fill="#dd2e44"/><path d="M2.5 9.8h3.6l-0.5 5.4c-0.2 1-2.4 1-2.6 0z" fill="#be1931"/></svg>
<div class="t" id="t71" style="left:800.00px;top:864.77px;font-size:17.4px;line-height:24px;color:#262522;transform:scaleX(0.9750);-webkit-text-stroke:0.4px #262522;"><u>Sales &amp; Marketing</u></div>
</body></html>
